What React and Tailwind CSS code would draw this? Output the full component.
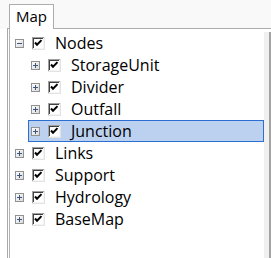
import React from 'react';

const layers = [
  { label: 'Nodes', level: 0, open: true },
  { label: 'StorageUnit', level: 1 },
  { label: 'Divider', level: 1 },
  { label: 'Outfall', level: 1 },
  { label: 'Junction', level: 1, selected: true },
  { label: 'Links', level: 0 },
  { label: 'Support', level: 0 },
  { label: 'Hydrology', level: 0 },
  { label: 'BaseMap', level: 0 },
];

function Expander({ open }) {
  return (
    <svg width="9" height="9" viewBox="0 0 9 9" className="shrink-0">
      <defs>
        <linearGradient id="exp" x1="0" y1="0" x2="1" y2="1">
          <stop offset="0" stopColor="#ffffff" />
          <stop offset="1" stopColor="#d8d8d8" />
        </linearGradient>
      </defs>
      <rect x="0.5" y="0.5" width="8" height="8" fill="url(#exp)" stroke="#919191" />
      <path d="M2 4.5h5" stroke="#3b5680" strokeWidth="1" />
      {!open && <path d="M4.5 2v5" stroke="#3b5680" strokeWidth="1" />}
    </svg>
  );
}

function Check() {
  return (
    <svg width="13" height="13" viewBox="0 0 13 13" className="shrink-0">
      <rect x="0" y="0" width="13" height="13" fill="#e3e3e3" />
      <rect x="0" y="0" width="12" height="12" fill="#a0a0a0" />
      <rect x="1" y="1" width="11" height="11" fill="#f4f4f4" />
      <rect x="1" y="1" width="10" height="10" fill="#404040" />
      <rect x="2" y="2" width="9" height="9" fill="#ffffff" />
      <path d="M3 5.5l2 2.2 4.5-4.6" stroke="#000" strokeWidth="2" fill="none" />
    </svg>
  );
}

function Row({ label, level, open, selected }) {
  return (
    <div
      className={
        'flex items-center h-[22px] border pl-[2px] ' +
        (level === 1 ? 'ml-[16px] ' : '') +
        (selected ? 'bg-[#bcd1f0] border-[#2b6fd2]' : 'border-transparent')
      }
    >
      <Expander open={open} />
      <div className="ml-[8px]">
        <Check />
      </div>
      <span className="ml-[10px] text-[16px] leading-[22px] text-black whitespace-nowrap">{label}</span>
    </div>
  );
}

export default function App() {
  return (
    <div
      className="w-[271px] h-[258px] bg-white overflow-hidden flex flex-col"
      style={{ fontFamily: '"Open Sans", "Noto Sans", sans-serif' }}
    >
      <div className="flex items-end h-[29px] bg-[#f9f9f9] shrink-0">
        <div className="w-[7px] h-full" />
        <div className="w-[2px] h-[1px] border-b border-[#acacac]" />
        <div className="h-[25px] border border-b-0 border-[#acacac] bg-white px-[6px] text-[15px] leading-[22px] text-black">
          Map
        </div>
        <div className="flex-1 border-b border-[#acacac]" />
      </div>
      <div className="flex flex-1">
        <div className="ml-[7px] border-l border-[#a9a9a9] w-[2px]" />
        <div className="border-l border-[#b4b4b4] flex-1 pl-[2px] pt-[3px]">
          {layers.map((l) => (
            <Row key={l.label} {...l} />
          ))}
        </div>
        <div className="flex flex-col shrink-0">
          <div className="h-[3px]" />
          <div className="flex-1 w-[7px] bg-[#f0f0f0] border-r-2 border-[#a3a3a3]" />
        </div>
      </div>
    </div>
  );
}
